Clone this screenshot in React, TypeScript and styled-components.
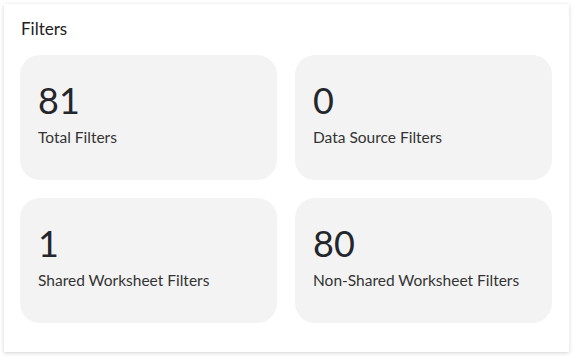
import styled, { createGlobalStyle } from 'styled-components';

const GlobalStyle = createGlobalStyle`
  body {
    margin: 0;
    background: #ffffff;
    font-family: 'Lato', 'Noto Sans', sans-serif;
  }
`;

const Page = styled.div`
  padding: 4px 10px 10px 4px;
`;

const Panel = styled.section`
  width: 565px;
  height: 348px;
  box-sizing: border-box;
  background: #ffffff;
  box-shadow: 0 1px 4px rgba(0, 0, 0, 0.18);
  padding: 15px 17px 0 16px;
`;

const Title = styled.h2`
  margin: 0 0 16px 1px;
  font-size: 17px;
  font-weight: 400;
  line-height: 20px;
  color: #222222;
`;

const Grid = styled.div`
  display: grid;
  grid-template-columns: 257px 257px;
  grid-auto-rows: 125px;
  gap: 18px;
`;

const Card = styled.div`
  background: #f3f3f3;
  border-radius: 20px;
  padding: 25px 18px 0;
  display: flex;
  flex-direction: column;
`;

const Value = styled.div`
  font-size: 36px;
  line-height: 40px;
  color: #23262b;
  font-weight: 400;
`;

const Label = styled.div`
  margin-top: 8px;
  font-size: 15.5px;
  line-height: 18px;
  color: #333333;
`;

const stats = [
  { value: '81', label: 'Total Filters' },
  { value: '0', label: 'Data Source Filters' },
  { value: '1', label: 'Shared Worksheet Filters' },
  { value: '80', label: 'Non-Shared Worksheet Filters' },
];

export default function App() {
  return (
    <>
      <GlobalStyle />
      <Page>
        <Panel>
          <Title>Filters</Title>
          <Grid>
            {stats.map((s) => (
              <Card key={s.label}>
                <Value>{s.value}</Value>
                <Label>{s.label}</Label>
              </Card>
            ))}
          </Grid>
        </Panel>
      </Page>
    </>
  );
}
